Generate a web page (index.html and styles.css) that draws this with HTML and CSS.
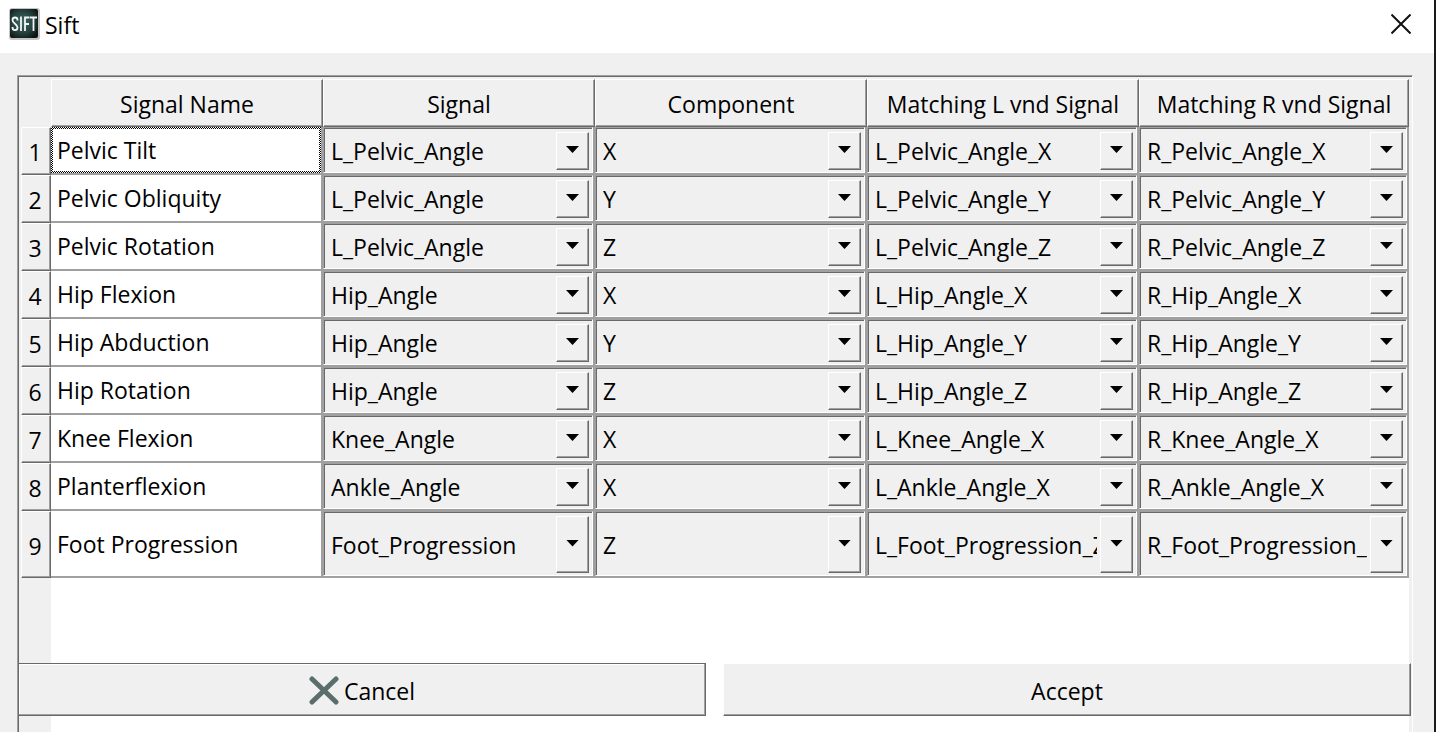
FILE: index.html
```html
<!DOCTYPE html>
<html lang="en">
<head>
    <meta charset="UTF-8">
    <meta name="viewport" content="width=device-width, initial-scale=1.0">
    <title>Sift</title>
    <link rel="stylesheet" href="styles.css">
</head>
<body>
    <div class="window">
        <header class="titlebar">
            <svg class="logo" viewBox="0 0 32 32" aria-hidden="true">
                <defs>
                    <radialGradient id="logoFill" cx="45%" cy="45%" r="65%">
                        <stop offset="0" stop-color="#3f6b66"/>
                        <stop offset="0.6" stop-color="#25403d"/>
                        <stop offset="1" stop-color="#0d1413"/>
                    </radialGradient>
                </defs>
                <rect x="1" y="0" width="31" height="32" rx="3" fill="#c4c4c4"/>
                <rect x="2" y="1" width="28" height="29" rx="2" fill="url(#logoFill)"/>
                <g fill="none" stroke="#f2f5f5" stroke-width="1.800">
                    <path d="M9.500 12.500V12Q9.500 9.500 7 9.500Q4.500 9.500 4.500 12C4.500 15.500 9.500 16 9.500 19.500Q9.500 22.200 7 22.200Q4.500 22.200 4.500 19.500V19"/>
                    <path d="M13 8.500V23"/>
                    <path d="M17 23V9.500H21.500M17 16H21"/>
                    <path d="M22 9.500H29M25.500 9.500V23"/>
                </g>
            </svg>
            <span class="title">Sift</span>
            <button class="close" type="button" aria-label="Close">
                <svg viewBox="0 0 20 20"><path d="M0.500 0.500L19.500 19.500M19.500 0.500L0.500 19.500"/></svg>
            </button>
        </header>

        <main class="content">
            <div class="frame">
                <table class="signals">
                    <colgroup>
                        <col class="col-num">
                        <col><col><col><col>
                        <col class="col-last">
                    </colgroup>
                    <thead>
                        <tr>
                            <td class="corner"></td>
                            <th scope="col">Signal Name</th>
                            <th scope="col">Signal</th>
                            <th scope="col">Component</th>
                            <th scope="col">Matching L vnd Signal</th>
                            <th scope="col">Matching R vnd Signal</th>
                        </tr>
                    </thead>
                    <tbody>
                        <tr>
                            <th scope="row">1</th>
                            <td class="name focused">Pelvic Tilt</td>
                            <td><div class="combo"><select aria-label="Signal 1"><option>L_Pelvic_Angle</option></select></div></td>
                            <td><div class="combo"><select aria-label="Component 1"><option selected>X</option><option>Y</option><option>Z</option></select></div></td>
                            <td><div class="combo"><select aria-label="Matching L 1"><option>L_Pelvic_Angle_X</option></select></div></td>
                            <td><div class="combo"><select aria-label="Matching R 1"><option>R_Pelvic_Angle_X</option></select></div></td>
                        </tr>
                        <tr>
                            <th scope="row">2</th>
                            <td class="name">Pelvic Obliquity</td>
                            <td><div class="combo"><select aria-label="Signal 2"><option>L_Pelvic_Angle</option></select></div></td>
                            <td><div class="combo"><select aria-label="Component 2"><option>X</option><option selected>Y</option><option>Z</option></select></div></td>
                            <td><div class="combo"><select aria-label="Matching L 2"><option>L_Pelvic_Angle_Y</option></select></div></td>
                            <td><div class="combo"><select aria-label="Matching R 2"><option>R_Pelvic_Angle_Y</option></select></div></td>
                        </tr>
                        <tr>
                            <th scope="row">3</th>
                            <td class="name">Pelvic Rotation</td>
                            <td><div class="combo"><select aria-label="Signal 3"><option>L_Pelvic_Angle</option></select></div></td>
                            <td><div class="combo"><select aria-label="Component 3"><option>X</option><option>Y</option><option selected>Z</option></select></div></td>
                            <td><div class="combo"><select aria-label="Matching L 3"><option>L_Pelvic_Angle_Z</option></select></div></td>
                            <td><div class="combo"><select aria-label="Matching R 3"><option>R_Pelvic_Angle_Z</option></select></div></td>
                        </tr>
                        <tr>
                            <th scope="row">4</th>
                            <td class="name">Hip Flexion</td>
                            <td><div class="combo"><select aria-label="Signal 4"><option>Hip_Angle</option></select></div></td>
                            <td><div class="combo"><select aria-label="Component 4"><option selected>X</option><option>Y</option><option>Z</option></select></div></td>
                            <td><div class="combo"><select aria-label="Matching L 4"><option>L_Hip_Angle_X</option></select></div></td>
                            <td><div class="combo"><select aria-label="Matching R 4"><option>R_Hip_Angle_X</option></select></div></td>
                        </tr>
                        <tr>
                            <th scope="row">5</th>
                            <td class="name">Hip Abduction</td>
                            <td><div class="combo"><select aria-label="Signal 5"><option>Hip_Angle</option></select></div></td>
                            <td><div class="combo"><select aria-label="Component 5"><option>X</option><option selected>Y</option><option>Z</option></select></div></td>
                            <td><div class="combo"><select aria-label="Matching L 5"><option>L_Hip_Angle_Y</option></select></div></td>
                            <td><div class="combo"><select aria-label="Matching R 5"><option>R_Hip_Angle_Y</option></select></div></td>
                        </tr>
                        <tr>
                            <th scope="row">6</th>
                            <td class="name">Hip Rotation</td>
                            <td><div class="combo"><select aria-label="Signal 6"><option>Hip_Angle</option></select></div></td>
                            <td><div class="combo"><select aria-label="Component 6"><option>X</option><option>Y</option><option selected>Z</option></select></div></td>
                            <td><div class="combo"><select aria-label="Matching L 6"><option>L_Hip_Angle_Z</option></select></div></td>
                            <td><div class="combo"><select aria-label="Matching R 6"><option>R_Hip_Angle_Z</option></select></div></td>
                        </tr>
                        <tr>
                            <th scope="row">7</th>
                            <td class="name">Knee Flexion</td>
                            <td><div class="combo"><select aria-label="Signal 7"><option>Knee_Angle</option></select></div></td>
                            <td><div class="combo"><select aria-label="Component 7"><option selected>X</option><option>Y</option><option>Z</option></select></div></td>
                            <td><div class="combo"><select aria-label="Matching L 7"><option>L_Knee_Angle_X</option></select></div></td>
                            <td><div class="combo"><select aria-label="Matching R 7"><option>R_Knee_Angle_X</option></select></div></td>
                        </tr>
                        <tr>
                            <th scope="row">8</th>
                            <td class="name">Planterflexion</td>
                            <td><div class="combo"><select aria-label="Signal 8"><option>Ankle_Angle</option></select></div></td>
                            <td><div class="combo"><select aria-label="Component 8"><option selected>X</option><option>Y</option><option>Z</option></select></div></td>
                            <td><div class="combo"><select aria-label="Matching L 8"><option>L_Ankle_Angle_X</option></select></div></td>
                            <td><div class="combo"><select aria-label="Matching R 8"><option>R_Ankle_Angle_X</option></select></div></td>
                        </tr>
                        <tr class="tall">
                            <th scope="row">9</th>
                            <td class="name">Foot Progression</td>
                            <td><div class="combo"><select aria-label="Signal 9"><option>Foot_Progression</option></select></div></td>
                            <td><div class="combo"><select aria-label="Component 9"><option>X</option><option>Y</option><option selected>Z</option></select></div></td>
                            <td><div class="combo"><select aria-label="Matching L 9"><option>L_Foot_Progression_Z</option></select></div></td>
                            <td><div class="combo"><select aria-label="Matching R 9"><option>R_Foot_Progression_Z</option></select></div></td>
                        </tr>
                    </tbody>
                </table>
            </div>
        </main>

        <footer class="actions">
            <button class="btn btn-default" type="button">
                <svg viewBox="0 0 30 30" aria-hidden="true"><path d="M3 3L27 26M27 3L3 26"/></svg>
                Cancel
            </button>
            <button class="btn" type="button">Accept</button>
        </footer>
    </div>
</body>
</html>
```
FILE: styles.css
```css
* {
    box-sizing: border-box;
}
body {
    margin: 0;
    background: #f0f0f0;
    color: #000;
    font-family: "Open Sans", "Noto Sans", sans-serif;
    font-size: 23px;
    line-height: 30px;
}
button, select {
    font: inherit;
    color: inherit;
    border-radius: 0;
}
.window {
    position: relative;
    display: flex;
    flex-direction: column;
    height: 100vh;
    overflow: hidden;
    border-right: 2px solid #1a1a1a;
}

/* title bar */
.titlebar {
    display: flex;
    align-items: center;
    flex: none;
    height: 53px;
    padding: 0 23px 5px 8px;
    background: #fff;
}
.logo {
    width: 32px;
    height: 32px;
}
.title {
    flex: 1;
    padding: 2px 0 0 5px;
}
.close {
    display: flex;
    padding: 0;
    border: none;
    background: none;
}
.close svg {
    width: 20px;
    height: 20px;
    fill: none;
    stroke: #111;
    stroke-width: 2;
}

/* table frame, runs on under the bottom buttons */
.content {
    display: flex;
    flex: 1;
    min-height: 0;
    padding: 22px 21px 0 17px;
}
.frame {
    flex: 1;
    padding: 3px 3px 0;
    border: 1px solid #a0a0a0;
    border-right-color: #fff;
    border-bottom: none;
    box-shadow: inset 1px 1px #696969;
    background: linear-gradient(to right, #f0f0f0 30px, #fff 30px) content-box;
    overflow: hidden;
}

.signals {
    width: 100%;
    table-layout: fixed;
    border-collapse: separate;
    border-spacing: 0;
}
.col-num {
    width: 30px;
}
.col-last {
    width: 270px;
}
.signals th,
.signals td {
    height: 48px;
    padding: 0;
    font-weight: normal;
}
.signals th,
.corner {
    background: #f0f0f0;
}
.signals th {
    border: 1px solid #fff;
    border-right-color: #696969;
    border-bottom-color: #696969;
    box-shadow: inset -1px -1px #a0a0a0;
}
.signals thead th {
    padding-top: 2px;
}
.signals tbody th {
    padding: 2px 2px 0 0;
}
.signals tbody td {
    border-right: 2px solid #a0a0a0;
    border-bottom: 2px solid #a0a0a0;
}
.signals tbody td.name {
    padding: 2px;
    text-indent: 4px;
    background: #fff;
}
/* checkered focus ring */
.signals tbody td.focused {
    background:
        linear-gradient(#fff, #fff) content-box,
        repeating-conic-gradient(#000 0 25%, #fff 0 50%) 0 0 / 2px 2px padding-box;
    background-clip: content-box, padding-box;
}
.signals .focused {
    vertical-align: top;
}
.signals tbody td.focused {
    height: 48px;
    line-height: 42px;
}
.signals .tall th,
.signals .tall td {
    height: 67px;
}

/* combo box */
.combo {
    position: relative;
    height: 46px;
}
.tall .combo {
    height: 65px;
}
.combo select {
    display: block;
    width: 100%;
    height: 100%;
    padding: 2px 39px 0 7px;
    border: 1px solid #a0a0a0;
    border-right-color: #fff;
    border-bottom-color: #fff;
    box-shadow: inset 1px 1px #696969;
    background: #f0f0f0;
    appearance: none;
    outline: none;
}
.combo::before {
    content: "";
    position: absolute;
    top: 5px;
    right: 4px;
    bottom: 3px;
    width: 31px;
    border: 1px solid #fff;
    border-right-color: #696969;
    border-bottom-color: #696969;
    box-shadow: inset -1px -1px #a0a0a0;
    pointer-events: none;
}
.combo::after {
    content: "";
    position: absolute;
    top: calc(50% - 4px);
    right: 14px;
    width: 13px;
    height: 7px;
    background: #000;
    clip-path: polygon(0 0, 100% 0, 50% 100%);
    pointer-events: none;
}

/* bottom buttons */
.actions {
    position: absolute;
    left: 18px;
    right: 23px;
    bottom: 16px;
    display: flex;
    gap: 17px;
}
.btn {
    display: flex;
    flex: 1;
    align-items: center;
    justify-content: center;
    gap: 5px;
    height: 53px;
    padding: 2px 0 0;
    border: 1px solid #fff;
    border-right-color: #696969;
    border-bottom-color: #696969;
    box-shadow: inset -1px -1px #a0a0a0;
    background: #f0f0f0;
}
.btn-default {
    border-color: #696969;
    box-shadow: inset -1px -1px #a0a0a0, inset 1px 1px #fff;
}
.btn svg {
    width: 30px;
    height: 30px;
    fill: none;
    stroke: #5a6e6c;
    stroke-width: 5;
    stroke-linecap: round;
}
```
